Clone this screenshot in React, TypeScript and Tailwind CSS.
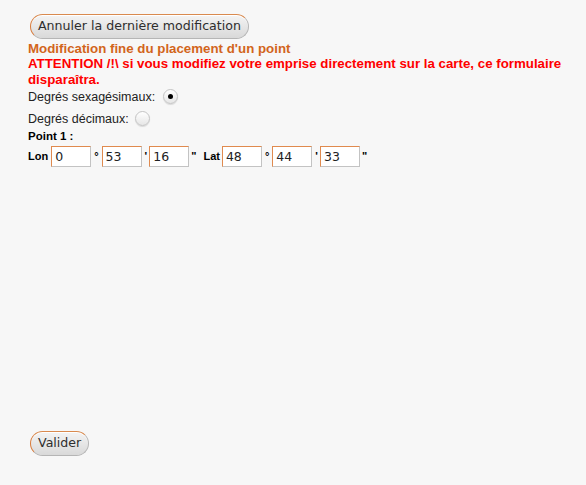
import React from 'react';

function GtkButton({ label }: { label: string }) {
  return (
    <button
      type="button"
      className="h-[25px] px-[7px] rounded-full border border-[#b5b5b5] border-l-[#d77a3a] border-t-[#d98a4f] bg-gradient-to-b from-[#f4f4f4] to-[#d9d9d9] text-[12.6px] leading-none text-[#2e2e2e] shadow-[inset_0_1px_0_#fff]"
      style={{ fontFamily: '"DejaVu Sans", sans-serif' }}
    >
      {label}
    </button>
  );
}

function Radio({ checked }: { checked?: boolean }) {
  return (
    <span className="inline-flex h-[15px] w-[15px] items-center justify-center rounded-full border border-[#c4c4c4] bg-gradient-to-b from-white to-[#e6e6e6] shadow-[0_1px_1px_rgba(0,0,0,0.12)]">
      {checked && <span className="h-[5px] w-[5px] rounded-full bg-black" />}
    </span>
  );
}

function Field({ value }: { value: string }) {
  return (
    <input
      type="text"
      defaultValue={value}
      className="h-[21px] w-[40px] border border-[#c3c3c3] border-l-[#e08a4e] border-t-[#e08a4e] bg-white px-[3px] text-[12.5px] font-normal text-[#222] outline-none"
      style={{ fontFamily: '"DejaVu Sans", sans-serif' }}
    />
  );
}

function App() {
  return (
    <div
      className="min-h-[485px] w-full bg-[#f7f7f7] pl-[28px] pr-[10px] pt-[13px] text-black"
      style={{ fontFamily: '"Liberation Sans", Arial, sans-serif' }}
    >
      <div className="pl-[2px]">
        <GtkButton label="Annuler la dernière modification" />
      </div>

      <p className="mt-[2px] text-[13.3px] font-bold leading-[15px] text-[#d2651c]">
        Modification fine du placement d'un point
      </p>
      <p className="text-[13.3px] font-bold leading-[16px] text-[#ff0000]">
        ATTENTION /!\ si vous modifiez votre emprise directement sur la carte, ce formulaire disparaîtra.
      </p>

      <div className="mt-[1px] flex items-center gap-[8px] text-[12.5px] leading-[16px] text-[#222]">
        <span>Degrés sexagésimaux:</span>
        <Radio checked />
      </div>
      <div className="mt-[6px] flex items-center gap-[6px] text-[12.5px] leading-[16px] text-[#222]">
        <span>Degrés décimaux:</span>
        <Radio />
      </div>

      <p className="mt-[2px] text-[11.5px] font-bold leading-[14px]">Point 1 :</p>

      <div className="mt-[3px] flex items-center text-[11px] font-bold">
        <span className="mr-[3px]">Lon</span>
        <Field value="0" />
        <span className="mx-[3px]">°</span>
        <Field value="53" />
        <span className="ml-[3px] mr-[2px]">'</span>
        <Field value="16" />
        <span className="ml-[2px] mr-[7px]">"</span>
        <span className="mr-[2px]">Lat</span>
        <Field value="48" />
        <span className="mx-[3px]">°</span>
        <Field value="44" />
        <span className="ml-[3px] mr-[2px]">'</span>
        <Field value="33" />
        <span className="ml-[2px]">"</span>
      </div>

      <div className="mt-[263px] pl-[2px]">
        <GtkButton label="Valider" />
      </div>
    </div>
  );
}

export default App;
